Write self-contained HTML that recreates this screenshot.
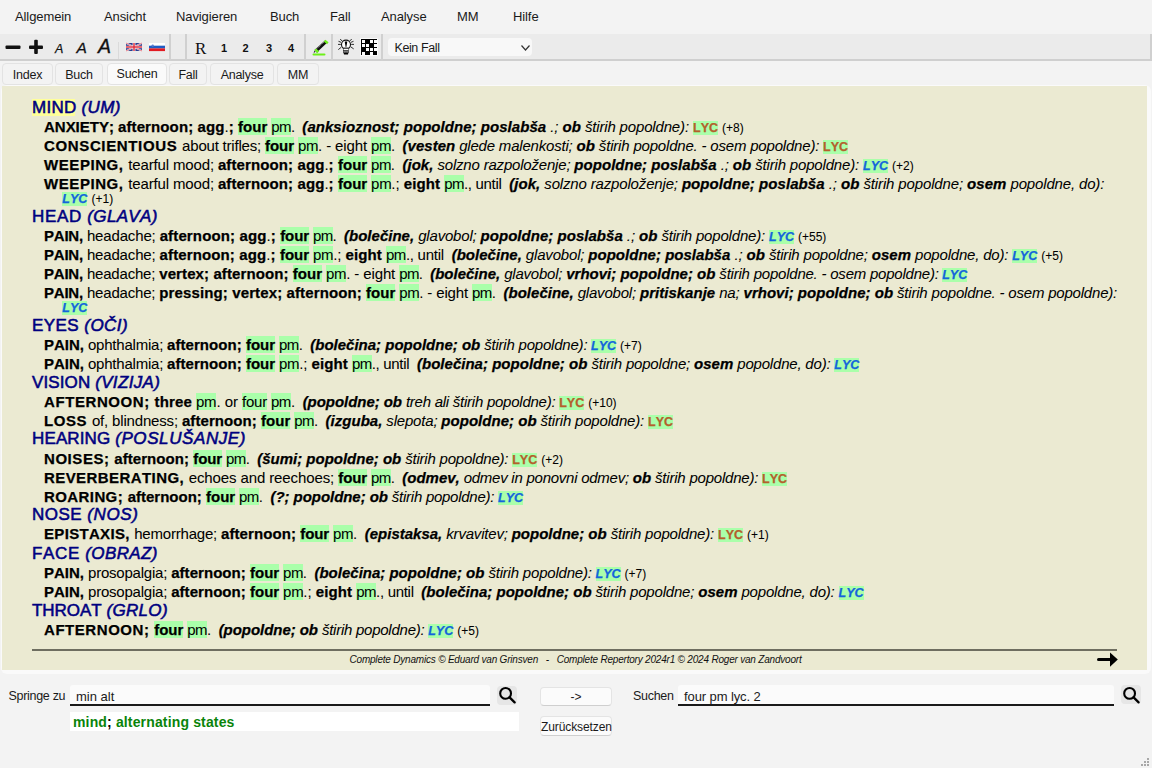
<!DOCTYPE html>
<html><head><meta charset="utf-8">
<style>
*{box-sizing:border-box}
html,body{margin:0;padding:0}
body{font-kerning:none;width:1152px;height:768px;overflow:hidden;position:relative;background:#f3f3f3;font-family:"Liberation Sans",sans-serif;color:#000}
.abs{position:absolute}
.menu span{position:absolute;top:9px;letter-spacing:-0.1px;font-size:13px;line-height:15px;color:#1a1a1a;white-space:nowrap}
#tb{position:absolute;left:0;top:34px;width:1152px;height:27px;background:#ebebeb;border-bottom:2px solid #cfcfcf;border-right:2px solid #d0d0d0}
.sep{position:absolute;top:34px;height:27px;width:2px;background:#d0d0d0}
.tab{position:absolute;top:63px;height:22px;border:1px solid #e3e3e3;border-radius:4px;background:#f3f3f3;font-size:12.5px;letter-spacing:-0.25px;line-height:23px;text-align:center;color:#1a1a1a}
.tab.sel{background:#fafafa;line-height:21px}
#panel{position:absolute;left:1px;top:85px;width:1150px;height:589px;background:#fafafa;border-radius:6px}
#beige{position:absolute;left:2px;top:86px;width:1145px;height:584px;background:#ebead2}
.ln{position:absolute;white-space:nowrap;line-height:19px;-webkit-text-stroke:0.05px currentColor}
.ln .b,.ln .lb,.ln .lu{-webkit-text-stroke:0.25px currentColor}
.hd{-webkit-text-stroke:0.55px currentColor}
.hd{font-size:17px;color:#000080}
.rb{font-size:15px}
.wr{font-size:15px}
.b{font-weight:bold}.i{font-style:italic}.h{background:#aaffaa}
.y{background:#ffff99}
.lb{font-size:12.5px;font-weight:bold;color:#b4602c}
.lu{font-size:12.5px;font-weight:bold;font-style:italic;color:#1464dc}
.c{font-size:12px}
#rule{position:absolute;left:32px;top:649px;width:1085px;height:2px;background:#6e6e60}
#foot{position:absolute;left:349.5px;top:654px;font-size:10px;letter-spacing:-0.2px;font-style:italic;line-height:12px;white-space:nowrap;color:#111}
.lbl{position:absolute;font-size:12.5px;letter-spacing:-0.3px;line-height:15px;color:#1a1a1a;white-space:nowrap}
.inp{position:absolute;background:#fbfbfb;border-radius:3px 3px 0 0;border-bottom:2px solid #1a1a1a}
.btn{position:absolute;background:#fbfbfb;border:1px solid #e4e4e4;border-bottom-color:#cfcfcf;border-radius:4px;font-size:12px;text-align:center;color:#1a1a1a}
</style></head><body>
<div class="menu">
<span style="left:15px">Allgemein</span>
<span style="left:104px">Ansicht</span>
<span style="left:176px">Navigieren</span>
<span style="left:270px">Buch</span>
<span style="left:330px">Fall</span>
<span style="left:381px">Analyse</span>
<span style="left:457px">MM</span>
<span style="left:513px">Hilfe</span>
</div>
<div id="tb"></div>
<div class="sep" style="left:169px"></div>
<div class="sep" style="left:185px"></div>
<div class="sep" style="left:304px"></div>
<div class="sep" style="left:331px"></div>
<div class="sep" style="left:381px"></div>
<div class="abs" style="left:118px;top:42px;width:1px;height:17px;background:#dadada"></div>
<!-- toolbar icons -->
<svg class="abs" style="left:0;top:34px" width="540" height="26" viewBox="0 34 540 26">
 <rect x="5.5" y="45.5" width="15" height="3.5" fill="#111" rx="1"/>
 <rect x="29" y="45.5" width="14" height="3.5" fill="#111" rx="1"/>
 <rect x="34.2" y="39.7" width="3.6" height="14.3" fill="#111" rx="1"/>
 <text x="55" y="53" font-family="Liberation Sans" font-style="italic" font-size="12.5" fill="#111" stroke="#111" stroke-width="0.25">A</text>
 <text x="76.5" y="53" font-family="Liberation Sans" font-style="italic" font-size="15.5" fill="#111" stroke="#111" stroke-width="0.3">A</text>
 <text x="98" y="53" font-family="Liberation Sans" font-style="italic" font-size="19.5" fill="#111" stroke="#111" stroke-width="0.35">A</text>
 <!-- UK flag -->
 <g>
  <rect x="126" y="43" width="16" height="8" fill="#2a3c90" rx="0.8"/>
  <path d="M126 43 L142 51 M142 43 L126 51" stroke="#f4f4f4" stroke-width="1.5"/>
  <path d="M126 43 L142 51 M142 43 L126 51" stroke="#d8283a" stroke-width="0.6"/>
  <rect x="132.6" y="43" width="2.8" height="8" fill="#f4f4f4"/>
  <rect x="126" y="45.8" width="16" height="2.4" fill="#f4f4f4"/>
  <rect x="133.3" y="43" width="1.4" height="8" fill="#e0283a"/>
  <rect x="126" y="46.3" width="16" height="1.4" fill="#e0283a"/>
 </g>
 <g>
  <rect x="149" y="43" width="16" height="2.7" fill="#fff"/>
  <rect x="149" y="45.7" width="16" height="2.7" fill="#1f5cc4"/>
  <rect x="149" y="48.4" width="16" height="2.7" fill="#e21a22"/>
  <circle cx="152.7" cy="45.6" r="1.2" fill="#5a7fd0"/>
 </g>
 <text x="195" y="54" font-family="Liberation Serif" font-size="17" fill="#111">R</text>
 <text x="221" y="52" font-family="Liberation Sans" font-weight="bold" font-size="11" fill="#111">1</text>
 <text x="242.5" y="52" font-family="Liberation Sans" font-weight="bold" font-size="11" fill="#111">2</text>
 <text x="266" y="52" font-family="Liberation Sans" font-weight="bold" font-size="11" fill="#111">3</text>
 <text x="288" y="52" font-family="Liberation Sans" font-weight="bold" font-size="11" fill="#111">4</text>
 <!-- pencil -->
 <path d="M315.6 51.2 L326 41.6" stroke="#111" stroke-width="3.2"/>
 <path d="M315.2 50.2 L325 41.2" stroke="#eee" stroke-width="0.8" stroke-dasharray="0.9 0.9"/>
 <path d="M324.6 40.6 L327.8 43.2" stroke="#6ef01a" stroke-width="2.4"/>
 <path d="M315.2 49.4 L318.2 52.2" stroke="#6ef01a" stroke-width="2.6"/>
 <path d="M313.6 53.6 L315.4 51.6 L314.2 50.8 Z" fill="#302040"/>
 <rect x="312.5" y="53.4" width="13" height="2.2" fill="#6ef01a" rx="1.1"/>
 <!-- bulb -->
 <g stroke="#1a1a1a" stroke-width="0.9" fill="none">
  <path d="M338 44.4 L340.8 44.4 M351.2 44.4 L354 44.4 M340.2 39 L342.3 41.2 M351.7 39 L349.6 41.2 M338.5 41.3 L341 42.3 M353.5 41.3 L351 42.3 M338.3 49.6 L341.2 47.3 M353.7 48.9 L350.7 46.8"/>
 </g>
 <circle cx="346" cy="44.6" r="4.5" fill="#fff" stroke="#111" stroke-width="1.1"/>
 <path d="M344.7 41.6 L347.3 41.6 L346.3 47.2 L345.7 47.2 Z" fill="#000"/>
 <rect x="343.3" y="47.6" width="5.4" height="1" fill="#111"/>
 <rect x="343.3" y="48.6" width="5.4" height="1.8" fill="#fafafa" stroke="#222" stroke-width="0.5"/>
 <rect x="343.3" y="50.4" width="5.4" height="2.6" fill="#7a7a7a" stroke="#222" stroke-width="0.5"/>
 <rect x="343.8" y="52.8" width="4.4" height="1.8" fill="#000" rx="0.9"/>
 <!-- grid -->
 <rect x="360" y="38" width="18" height="18" fill="#fafafa" rx="1"/>
 <g fill="#000">
  <rect x="361" y="39" width="16" height="1"/>
  <rect x="361" y="39" width="1" height="16"/>
  <rect x="361" y="43" width="16" height="1"/>
  <rect x="361" y="47" width="16" height="1"/>
  <rect x="361" y="51" width="16" height="1"/>
  <rect x="365" y="39" width="1" height="13"/>
  <rect x="369" y="39" width="1" height="13"/>
  <rect x="373" y="39" width="1" height="13"/>
  <rect x="365" y="40" width="5" height="3"/>
  <rect x="369" y="44" width="5" height="3"/>
  <rect x="361" y="48" width="5" height="3"/>
  <rect x="365" y="51" width="5" height="4"/>
  <rect x="373" y="51" width="4" height="4"/>
 </g>
</svg>
<div class="abs" style="left:388px;top:38px;width:144px;height:18px;background:#f8f8f8;border-radius:4px"></div>
<div class="lbl" style="left:394.5px;top:41px;font-size:12.5px;letter-spacing:-0.4px">Kein Fall</div>
<svg class="abs" style="left:520px;top:44px" width="12" height="8"><path d="M1.5 1.5 L5.5 6 L9.5 1.5" stroke="#333" stroke-width="1.2" fill="none"/></svg>
<!-- tabs -->
<div class="tab" style="left:2px;width:51px">Index</div>
<div class="tab" style="left:55px;width:48px">Buch</div>
<div class="tab sel" style="left:107px;width:60px">Suchen</div>
<div class="tab" style="left:169px;width:38px">Fall</div>
<div class="tab" style="left:210px;width:64px">Analyse</div>
<div class="tab" style="left:277px;width:42px">MM</div>
<!-- panel -->
<div id="panel"></div>
<div id="beige"></div>
<div class="abs" style="left:32px;top:99px;width:43px;height:17px;background:#ffff99"></div>
<div class="ln hd" style="left:32.00px;top:98px"><span class="" style="letter-spacing:0.25px">MIND </span></div>
<div class="ln hd" style="left:81.40px;top:98px"><span class="i" style="letter-spacing:0.46px">(UM)</span></div>
<div class="ln rb" style="left:44.00px;top:116.5px"><span class="b" style="letter-spacing:-0.02px">ANXIETY</span><span class="b" style="letter-spacing:-0.02px">; </span></div>
<div class="ln rb" style="left:118.00px;top:116.5px"><span class="b" style="letter-spacing:0.11px">afternoon; agg</span><span class="" style="letter-spacing:-0.06px">.</span><span class="b" style="letter-spacing:0.11px">; </span></div>
<div class="ln rb" style="left:238.00px;top:116.5px"><span class="b h" style="letter-spacing:0.03px">four</span><span class="" style="letter-spacing:-0.14px"> </span></div>
<div class="ln rb" style="left:271.30px;top:116.5px"><span class="h" style="letter-spacing:-0.60px">pm</span><span class="" style="letter-spacing:-0.36px">.&nbsp; </span></div>
<div class="ln rb" style="left:302.36px;top:116.5px"><span class="b i" style="letter-spacing:0.04px">(anksioznost; popoldne; poslabša</span><span class="i" style="letter-spacing:-0.10px"> .; </span><span class="b i" style="letter-spacing:0.05px">ob</span><span class="i" style="letter-spacing:-0.16px"> štirih popoldne): </span></div>
<div class="ln rb" style="left:693.00px;top:116.5px"><span class="h lb">LYC</span><span class="" style="letter-spacing:-0.16px"> </span><span class="c">(+8)</span></div>
<div class="ln rb" style="left:44.00px;top:135.5px"><span class="b" style="letter-spacing:0.64px">CONSCIENTIOUS</span><span class="b" style="letter-spacing:0.64px"> </span></div>
<div class="ln rb" style="left:182.10px;top:135.5px"><span class="" style="letter-spacing:-0.20px">about trifles; </span></div>
<div class="ln rb" style="left:265.00px;top:135.5px"><span class="b h" style="letter-spacing:-0.05px">four</span><span class="" style="letter-spacing:-0.22px"> </span></div>
<div class="ln rb" style="left:297.90px;top:135.5px"><span class="h" style="letter-spacing:-0.32px">pm</span><span class="" style="letter-spacing:-0.12px">. - eight </span></div>
<div class="ln rb" style="left:371.10px;top:135.5px"><span class="h" style="letter-spacing:-0.52px">pm</span><span class="" style="letter-spacing:-0.28px">.&nbsp; </span></div>
<div class="ln rb" style="left:402.56px;top:135.5px"><span class="b i" style="letter-spacing:0.02px">(vesten</span><span class="i" style="letter-spacing:-0.20px"> glede malenkosti; </span><span class="b i" style="letter-spacing:0.03px">ob</span><span class="i" style="letter-spacing:-0.19px"> štirih popoldne. - osem popoldne): </span></div>
<div class="ln rb" style="left:823.10px;top:135.5px"><span class="h lb">LYC</span></div>
<div class="ln rb" style="left:44.00px;top:154.5px"><span class="b" style="letter-spacing:0.57px">WEEPING</span><span class="b" style="letter-spacing:0.57px">, </span></div>
<div class="ln rb" style="left:128.30px;top:154.5px"><span class="" style="letter-spacing:-0.15px">tearful mood; </span><span class="b" style="letter-spacing:0.11px">afternoon; agg</span><span class="" style="letter-spacing:-0.05px">.</span><span class="b" style="letter-spacing:0.11px">; </span></div>
<div class="ln rb" style="left:338.00px;top:154.5px"><span class="b h" style="letter-spacing:-0.01px">four</span><span class="" style="letter-spacing:-0.18px"> </span></div>
<div class="ln rb" style="left:371.10px;top:154.5px"><span class="h" style="letter-spacing:-0.54px">pm</span><span class="" style="letter-spacing:-0.30px">.&nbsp; </span></div>
<div class="ln rb" style="left:402.46px;top:154.5px"><span class="b i" style="letter-spacing:0.03px">(jok,</span><span class="i" style="letter-spacing:-0.19px"> solzno razpoloženje; </span><span class="b i" style="letter-spacing:0.03px">popoldne; poslabša</span><span class="i" style="letter-spacing:-0.11px"> .; </span><span class="b i" style="letter-spacing:0.03px">ob</span><span class="i" style="letter-spacing:-0.17px"> štirih popoldne): </span></div>
<div class="ln rb" style="left:863.00px;top:154.5px"><span class="h lu">LYC</span><span class="" style="letter-spacing:-0.16px"> </span><span class="c">(+2)</span></div>
<div class="ln rb" style="left:44.00px;top:173.5px"><span class="b" style="letter-spacing:0.57px">WEEPING</span><span class="b" style="letter-spacing:0.57px">, </span></div>
<div class="ln rb" style="left:128.30px;top:173.5px"><span class="" style="letter-spacing:-0.15px">tearful mood; </span><span class="b" style="letter-spacing:0.11px">afternoon; agg</span><span class="" style="letter-spacing:-0.05px">.</span><span class="b" style="letter-spacing:0.11px">; </span></div>
<div class="ln rb" style="left:338.00px;top:173.5px"><span class="b h" style="letter-spacing:-0.01px">four</span><span class="" style="letter-spacing:-0.18px"> </span></div>
<div class="ln rb" style="left:371.10px;top:173.5px"><span class="h" style="letter-spacing:-0.30px">pm</span><span class="" style="letter-spacing:-0.05px">.; </span><span class="b" style="letter-spacing:0.11px">eight</span><span class="" style="letter-spacing:-0.05px"> </span></div>
<div class="ln rb" style="left:444.20px;top:173.5px"><span class="h" style="letter-spacing:-0.54px">pm</span><span class="" style="letter-spacing:-0.32px">., until&nbsp; </span></div>
<div class="ln rb" style="left:509.16px;top:173.5px"><span class="b i" style="letter-spacing:0.06px">(jok,</span><span class="i" style="letter-spacing:-0.16px"> solzno razpoloženje; </span><span class="b i" style="letter-spacing:0.06px">popoldne; poslabša</span><span class="i" style="letter-spacing:-0.08px"> .; </span><span class="b i" style="letter-spacing:0.06px">ob</span><span class="i" style="letter-spacing:-0.14px"> štirih popoldne; </span><span class="b i" style="letter-spacing:0.07px">osem</span><span class="i" style="letter-spacing:-0.16px"> popoldne, do):</span></div>
<div class="ln wr" style="left:62.30px;top:187.5px"><span class="h lu">LYC</span> <span class="c">(+1)</span></div>
<div class="ln hd" style="left:32.00px;top:206.5px"><span class="" style="letter-spacing:0.67px">HEAD </span></div>
<div class="ln hd" style="left:87.30px;top:206.5px"><span class="i" style="letter-spacing:0.35px">(GLAVA)</span></div>
<div class="ln rb" style="left:44.00px;top:225.5px"><span class="b" style="letter-spacing:-0.21px">PAIN</span><span class="b" style="letter-spacing:-0.21px">, </span></div>
<div class="ln rb" style="left:86.90px;top:225.5px"><span class="" style="letter-spacing:-0.15px">headache; </span><span class="b" style="letter-spacing:0.14px">afternoon; agg</span><span class="" style="letter-spacing:-0.02px">.</span><span class="b" style="letter-spacing:0.14px">; </span></div>
<div class="ln rb" style="left:280.20px;top:225.5px"><span class="b h" style="letter-spacing:-0.07px">four</span><span class="" style="letter-spacing:-0.24px"> </span></div>
<div class="ln rb" style="left:313.00px;top:225.5px"><span class="h" style="letter-spacing:-0.62px">pm</span><span class="" style="letter-spacing:-0.38px">.&nbsp; </span></div>
<div class="ln rb" style="left:343.96px;top:225.5px"><span class="b i" style="letter-spacing:0.02px">(bolečine,</span><span class="i" style="letter-spacing:-0.18px"> glavobol; </span><span class="b i" style="letter-spacing:0.03px">popoldne; poslabša</span><span class="i" style="letter-spacing:-0.12px"> .; </span><span class="b i" style="letter-spacing:0.03px">ob</span><span class="i" style="letter-spacing:-0.18px"> štirih popoldne): </span></div>
<div class="ln rb" style="left:769.00px;top:225.5px"><span class="h lu">LYC</span><span class="" style="letter-spacing:-0.16px"> </span><span class="c">(+55)</span></div>
<div class="ln rb" style="left:44.00px;top:244.5px"><span class="b" style="letter-spacing:-0.21px">PAIN</span><span class="b" style="letter-spacing:-0.21px">, </span></div>
<div class="ln rb" style="left:86.90px;top:244.5px"><span class="" style="letter-spacing:-0.16px">headache; </span><span class="b" style="letter-spacing:0.13px">afternoon; agg</span><span class="" style="letter-spacing:-0.03px">.</span><span class="b" style="letter-spacing:0.13px">; </span></div>
<div class="ln rb" style="left:280.00px;top:244.5px"><span class="b h" style="letter-spacing:-0.03px">four</span><span class="" style="letter-spacing:-0.20px"> </span></div>
<div class="ln rb" style="left:313.00px;top:244.5px"><span class="h" style="letter-spacing:-0.31px">pm</span><span class="" style="letter-spacing:-0.06px">.; </span><span class="b" style="letter-spacing:0.10px">eight</span><span class="" style="letter-spacing:-0.06px"> </span></div>
<div class="ln rb" style="left:386.00px;top:244.5px"><span class="h" style="letter-spacing:-0.48px">pm</span><span class="" style="letter-spacing:-0.26px">., until&nbsp; </span></div>
<div class="ln rb" style="left:451.66px;top:244.5px"><span class="b i" style="letter-spacing:0.02px">(bolečine,</span><span class="i" style="letter-spacing:-0.18px"> glavobol; </span><span class="b i" style="letter-spacing:0.02px">popoldne; poslabša</span><span class="i" style="letter-spacing:-0.12px"> .; </span><span class="b i" style="letter-spacing:0.03px">ob</span><span class="i" style="letter-spacing:-0.18px"> štirih popoldne; </span><span class="b i" style="letter-spacing:0.03px">osem</span><span class="i" style="letter-spacing:-0.19px"> popoldne, do): </span></div>
<div class="ln rb" style="left:1012.20px;top:244.5px"><span class="h lu">LYC</span><span class="" style="letter-spacing:-0.16px"> </span><span class="c">(+5)</span></div>
<div class="ln rb" style="left:44.00px;top:263.5px"><span class="b" style="letter-spacing:-0.21px">PAIN</span><span class="b" style="letter-spacing:-0.21px">, </span></div>
<div class="ln rb" style="left:86.90px;top:263.5px"><span class="" style="letter-spacing:-0.19px">headache; </span><span class="b" style="letter-spacing:0.10px">vertex; afternoon; </span></div>
<div class="ln rb" style="left:292.80px;top:263.5px"><span class="b h" style="letter-spacing:0.03px">four</span><span class="" style="letter-spacing:-0.14px"> </span></div>
<div class="ln rb" style="left:326.10px;top:263.5px"><span class="h" style="letter-spacing:-0.32px">pm</span><span class="" style="letter-spacing:-0.13px">. - eight </span></div>
<div class="ln rb" style="left:399.20px;top:263.5px"><span class="h" style="letter-spacing:-0.62px">pm</span><span class="" style="letter-spacing:-0.38px">.&nbsp; </span></div>
<div class="ln rb" style="left:430.16px;top:263.5px"><span class="b i">(bolečine,</span><span class="i" style="letter-spacing:-0.21px"> glavobol; </span><span class="b i">vrhovi; popoldne; ob</span><span class="i" style="letter-spacing:-0.22px"> štirih popoldne. - osem popoldne): </span></div>
<div class="ln rb" style="left:942.20px;top:263.5px"><span class="h lu">LYC</span></div>
<div class="ln rb" style="left:44.00px;top:282.5px"><span class="b" style="letter-spacing:-0.21px">PAIN</span><span class="b" style="letter-spacing:-0.21px">, </span></div>
<div class="ln rb" style="left:86.90px;top:282.5px"><span class="" style="letter-spacing:-0.18px">headache; </span><span class="b" style="letter-spacing:0.12px">pressing; vertex; afternoon; </span></div>
<div class="ln rb" style="left:366.10px;top:282.5px"><span class="b h" style="letter-spacing:-0.01px">four</span><span class="" style="letter-spacing:-0.18px"> </span></div>
<div class="ln rb" style="left:399.20px;top:282.5px"><span class="h" style="letter-spacing:-0.35px">pm</span><span class="" style="letter-spacing:-0.15px">. - eight </span></div>
<div class="ln rb" style="left:472.00px;top:282.5px"><span class="h" style="letter-spacing:-0.52px">pm</span><span class="" style="letter-spacing:-0.28px">.&nbsp; </span></div>
<div class="ln rb" style="left:503.46px;top:282.5px"><span class="b i" style="letter-spacing:0.02px">(bolečine,</span><span class="i" style="letter-spacing:-0.19px"> glavobol; </span><span class="b i" style="letter-spacing:0.02px">pritiskanje</span><span class="i" style="letter-spacing:-0.18px"> na; </span><span class="b i" style="letter-spacing:0.02px">vrhovi; popoldne; ob</span><span class="i" style="letter-spacing:-0.20px"> štirih popoldne. - osem popoldne):</span></div>
<div class="ln wr" style="left:62.30px;top:296.5px"><span class="h lu">LYC</span></div>
<div class="ln hd" style="left:32.00px;top:315.5px"><span class="" style="letter-spacing:0.44px">EYES </span></div>
<div class="ln hd" style="left:84.30px;top:315.5px"><span class="i" style="letter-spacing:0.43px">(OČI)</span></div>
<div class="ln rb" style="left:44.00px;top:334.5px"><span class="b" style="letter-spacing:-0.03px">PAIN</span><span class="b" style="letter-spacing:-0.03px">, </span></div>
<div class="ln rb" style="left:88.00px;top:334.5px"><span class="" style="letter-spacing:-0.22px">ophthalmia; </span><span class="b" style="letter-spacing:0.05px">afternoon; </span></div>
<div class="ln rb" style="left:246.00px;top:334.5px"><span class="b h" style="letter-spacing:-0.05px">four</span><span class="" style="letter-spacing:-0.22px"> </span></div>
<div class="ln rb" style="left:278.90px;top:334.5px"><span class="h" style="letter-spacing:-0.54px">pm</span><span class="" style="letter-spacing:-0.30px">.&nbsp; </span></div>
<div class="ln rb" style="left:310.26px;top:334.5px"><span class="b i">(bolečina; popoldne; ob</span><span class="i" style="letter-spacing:-0.21px"> štirih popoldne): </span></div>
<div class="ln rb" style="left:591.10px;top:334.5px"><span class="h lu">LYC</span><span class="" style="letter-spacing:-0.16px"> </span><span class="c">(+7)</span></div>
<div class="ln rb" style="left:44.00px;top:353.5px"><span class="b" style="letter-spacing:-0.03px">PAIN</span><span class="b" style="letter-spacing:-0.03px">, </span></div>
<div class="ln rb" style="left:88.00px;top:353.5px"><span class="" style="letter-spacing:-0.22px">ophthalmia; </span><span class="b" style="letter-spacing:0.05px">afternoon; </span></div>
<div class="ln rb" style="left:246.00px;top:353.5px"><span class="b h" style="letter-spacing:-0.05px">four</span><span class="" style="letter-spacing:-0.22px"> </span></div>
<div class="ln rb" style="left:278.90px;top:353.5px"><span class="h" style="letter-spacing:-0.30px">pm</span><span class="" style="letter-spacing:-0.05px">.; </span><span class="b" style="letter-spacing:0.11px">eight</span><span class="" style="letter-spacing:-0.05px"> </span></div>
<div class="ln rb" style="left:352.00px;top:353.5px"><span class="h" style="letter-spacing:-0.54px">pm</span><span class="" style="letter-spacing:-0.32px">., until&nbsp; </span></div>
<div class="ln rb" style="left:416.96px;top:353.5px"><span class="b i" style="letter-spacing:0.02px">(bolečina; popoldne; ob</span><span class="i" style="letter-spacing:-0.19px"> štirih popoldne; </span><span class="b i" style="letter-spacing:0.02px">osem</span><span class="i" style="letter-spacing:-0.20px"> popoldne, do): </span></div>
<div class="ln rb" style="left:834.25px;top:353.5px"><span class="h lu">LYC</span></div>
<div class="ln hd" style="left:32.00px;top:372.5px"><span class="" style="letter-spacing:0.12px">VISION </span></div>
<div class="ln hd" style="left:95.20px;top:372.5px"><span class="i" style="letter-spacing:0.34px">(VIZIJA)</span></div>
<div class="ln rb" style="left:44.00px;top:391.5px"><span class="b" style="letter-spacing:0.58px">AFTERNOON</span><span class="b" style="letter-spacing:0.58px">; </span></div>
<div class="ln rb" style="left:154.50px;top:391.5px"><span class="b" style="letter-spacing:0.14px">three</span><span class="" style="letter-spacing:-0.03px"> </span></div>
<div class="ln rb" style="left:196.00px;top:391.5px"><span class="h" style="letter-spacing:-0.23px">pm</span><span class="" style="letter-spacing:-0.02px">. or </span></div>
<div class="ln rb" style="left:242.10px;top:391.5px"><span class="h" style="letter-spacing:-0.24px">four</span><span class="" style="letter-spacing:-0.15px"> </span></div>
<div class="ln rb" style="left:271.00px;top:391.5px"><span class="h" style="letter-spacing:-0.48px">pm</span><span class="" style="letter-spacing:-0.24px">.&nbsp; </span></div>
<div class="ln rb" style="left:302.66px;top:391.5px"><span class="b i" style="letter-spacing:-0.05px">(popoldne; ob</span><span class="i" style="letter-spacing:-0.25px"> treh ali štirih popoldne): </span></div>
<div class="ln rb" style="left:559.20px;top:391.5px"><span class="h lb">LYC</span><span class="" style="letter-spacing:-0.16px"> </span><span class="c">(+10)</span></div>
<div class="ln rb" style="left:44.00px;top:410.5px"><span class="b" style="letter-spacing:0.58px">LOSS</span><span class="b" style="letter-spacing:0.58px"> </span></div>
<div class="ln rb" style="left:91.90px;top:410.5px"><span class="" style="letter-spacing:-0.17px">of, blindness; </span><span class="b" style="letter-spacing:0.08px">afternoon; </span></div>
<div class="ln rb" style="left:261.10px;top:410.5px"><span class="b h" style="letter-spacing:-0.01px">four</span><span class="" style="letter-spacing:-0.18px"> </span></div>
<div class="ln rb" style="left:294.20px;top:410.5px"><span class="h" style="letter-spacing:-0.54px">pm</span><span class="" style="letter-spacing:-0.30px">.&nbsp; </span></div>
<div class="ln rb" style="left:325.56px;top:410.5px"><span class="b i" style="letter-spacing:0.02px">(izguba,</span><span class="i" style="letter-spacing:-0.19px"> slepota; </span><span class="b i" style="letter-spacing:0.02px">popoldne; ob</span><span class="i" style="letter-spacing:-0.19px"> štirih popoldne): </span></div>
<div class="ln rb" style="left:648.10px;top:410.5px"><span class="h lb">LYC</span></div>
<div class="ln hd" style="left:32.00px;top:429px"><span class="" style="letter-spacing:0.13px">HEARING </span></div>
<div class="ln hd" style="left:115.20px;top:429px"><span class="i" style="letter-spacing:0.59px">(POSLUŠANJE)</span></div>
<div class="ln rb" style="left:44.00px;top:448.5px"><span class="b" style="letter-spacing:0.56px">NOISES</span><span class="b" style="letter-spacing:0.56px">; </span></div>
<div class="ln rb" style="left:114.30px;top:448.5px"><span class="b" style="letter-spacing:0.05px">afternoon; </span></div>
<div class="ln rb" style="left:193.20px;top:448.5px"><span class="b h" style="letter-spacing:-0.05px">four</span><span class="" style="letter-spacing:-0.22px"> </span></div>
<div class="ln rb" style="left:226.10px;top:448.5px"><span class="h" style="letter-spacing:-0.58px">pm</span><span class="" style="letter-spacing:-0.34px">.&nbsp; </span></div>
<div class="ln rb" style="left:257.26px;top:448.5px"><span class="b i" style="letter-spacing:-0.01px">(šumi; popoldne; ob</span><span class="i" style="letter-spacing:-0.21px"> štirih popoldne): </span></div>
<div class="ln rb" style="left:512.20px;top:448.5px"><span class="h lb">LYC</span><span class="" style="letter-spacing:-0.16px"> </span><span class="c">(+2)</span></div>
<div class="ln rb" style="left:44.00px;top:467.5px"><span class="b" style="letter-spacing:0.42px">REVERBERATING</span><span class="b" style="letter-spacing:0.42px">, </span></div>
<div class="ln rb" style="left:188.70px;top:467.5px"><span class="" style="letter-spacing:-0.11px">echoes and reechoes; </span></div>
<div class="ln rb" style="left:338.20px;top:467.5px"><span class="b h" style="letter-spacing:-0.05px">four</span><span class="" style="letter-spacing:-0.22px"> </span></div>
<div class="ln rb" style="left:371.10px;top:467.5px"><span class="h" style="letter-spacing:-0.58px">pm</span><span class="" style="letter-spacing:-0.34px">.&nbsp; </span></div>
<div class="ln rb" style="left:402.26px;top:467.5px"><span class="b i">(odmev,</span><span class="i" style="letter-spacing:-0.25px"> odmev in ponovni odmev; </span><span class="b i">ob</span><span class="i" style="letter-spacing:-0.21px"> štirih popoldne): </span></div>
<div class="ln rb" style="left:762.10px;top:467.5px"><span class="h lb">LYC</span></div>
<div class="ln rb" style="left:44.00px;top:486.5px"><span class="b" style="letter-spacing:0.41px">ROARING</span><span class="b" style="letter-spacing:0.41px">; </span></div>
<div class="ln rb" style="left:127.70px;top:486.5px"><span class="b">afternoon; </span></div>
<div class="ln rb" style="left:206.10px;top:486.5px"><span class="b h" style="letter-spacing:-0.05px">four</span><span class="" style="letter-spacing:-0.22px"> </span></div>
<div class="ln rb" style="left:239.00px;top:486.5px"><span class="h" style="letter-spacing:-0.52px">pm</span><span class="" style="letter-spacing:-0.28px">.&nbsp; </span></div>
<div class="ln rb" style="left:270.46px;top:486.5px"><span class="b i" style="letter-spacing:-0.05px">(?; popoldne; ob</span><span class="i" style="letter-spacing:-0.26px"> štirih popoldne): </span></div>
<div class="ln rb" style="left:498.10px;top:486.5px"><span class="h lu">LYC</span></div>
<div class="ln hd" style="left:32.00px;top:505px"><span class="" style="letter-spacing:0.48px">NOSE </span></div>
<div class="ln hd" style="left:87.30px;top:505px"><span class="i" style="letter-spacing:0.59px">(NOS)</span></div>
<div class="ln rb" style="left:44.00px;top:524px"><span class="b" style="letter-spacing:0.32px">EPISTAXIS</span><span class="b" style="letter-spacing:0.32px">, </span></div>
<div class="ln rb" style="left:134.20px;top:524px"><span class="" style="letter-spacing:-0.20px">hemorrhage; </span><span class="b" style="letter-spacing:0.09px">afternoon; </span></div>
<div class="ln rb" style="left:300.30px;top:524px"><span class="b h" style="letter-spacing:-0.09px">four</span><span class="" style="letter-spacing:-0.26px"> </span></div>
<div class="ln rb" style="left:333.00px;top:524px"><span class="h" style="letter-spacing:-0.46px">pm</span><span class="" style="letter-spacing:-0.22px">.&nbsp; </span></div>
<div class="ln rb" style="left:364.76px;top:524px"><span class="b i">(epistaksa,</span><span class="i" style="letter-spacing:-0.19px"> krvavitev; </span><span class="b i">popoldne; ob</span><span class="i" style="letter-spacing:-0.20px"> štirih popoldne): </span></div>
<div class="ln rb" style="left:718.10px;top:524px"><span class="h lb">LYC</span><span class="" style="letter-spacing:-0.16px"> </span><span class="c">(+1)</span></div>
<div class="ln hd" style="left:32.00px;top:543.5px"><span class="" style="letter-spacing:0.65px">FACE </span></div>
<div class="ln hd" style="left:85.30px;top:543.5px"><span class="i" style="letter-spacing:0.37px">(OBRAZ)</span></div>
<div class="ln rb" style="left:44.00px;top:563px"><span class="b" style="letter-spacing:-0.03px">PAIN</span><span class="b" style="letter-spacing:-0.03px">, </span></div>
<div class="ln rb" style="left:88.00px;top:563px"><span class="" style="letter-spacing:-0.21px">prosopalgia; </span><span class="b" style="letter-spacing:0.05px">afternoon; </span></div>
<div class="ln rb" style="left:250.00px;top:563px"><span class="b h" style="letter-spacing:-0.01px">four</span><span class="" style="letter-spacing:-0.18px"> </span></div>
<div class="ln rb" style="left:283.10px;top:563px"><span class="h" style="letter-spacing:-0.54px">pm</span><span class="" style="letter-spacing:-0.30px">.&nbsp; </span></div>
<div class="ln rb" style="left:314.46px;top:563px"><span class="b i">(bolečina; popoldne; ob</span><span class="i" style="letter-spacing:-0.20px"> štirih popoldne): </span></div>
<div class="ln rb" style="left:595.60px;top:563px"><span class="h lu">LYC</span><span class="" style="letter-spacing:-0.16px"> </span><span class="c">(+7)</span></div>
<div class="ln rb" style="left:44.00px;top:582px"><span class="b" style="letter-spacing:-0.03px">PAIN</span><span class="b" style="letter-spacing:-0.03px">, </span></div>
<div class="ln rb" style="left:88.00px;top:582px"><span class="" style="letter-spacing:-0.21px">prosopalgia; </span><span class="b" style="letter-spacing:0.05px">afternoon; </span></div>
<div class="ln rb" style="left:250.00px;top:582px"><span class="b h" style="letter-spacing:-0.01px">four</span><span class="" style="letter-spacing:-0.18px"> </span></div>
<div class="ln rb" style="left:283.10px;top:582px"><span class="h" style="letter-spacing:-0.29px">pm</span><span class="" style="letter-spacing:-0.05px">.; </span><span class="b" style="letter-spacing:0.12px">eight</span><span class="" style="letter-spacing:-0.05px"> </span></div>
<div class="ln rb" style="left:356.25px;top:582px"><span class="h" style="letter-spacing:-0.52px">pm</span><span class="" style="letter-spacing:-0.30px">., until&nbsp; </span></div>
<div class="ln rb" style="left:421.36px;top:582px"><span class="b i" style="letter-spacing:0.01px">(bolečina; popoldne; ob</span><span class="i" style="letter-spacing:-0.19px"> štirih popoldne; </span><span class="b i" style="letter-spacing:0.02px">osem</span><span class="i" style="letter-spacing:-0.20px"> popoldne, do): </span></div>
<div class="ln rb" style="left:838.60px;top:582px"><span class="h lu">LYC</span></div>
<div class="ln hd" style="left:32.00px;top:600.5px"><span class="" style="letter-spacing:-0.03px">THROAT </span></div>
<div class="ln hd" style="left:106.40px;top:600.5px"><span class="i" style="letter-spacing:0.33px">(GRLO)</span></div>
<div class="ln rb" style="left:44.00px;top:619.5px"><span class="b" style="letter-spacing:0.55px">AFTERNOON</span><span class="b" style="letter-spacing:0.55px">; </span></div>
<div class="ln rb" style="left:154.20px;top:619.5px"><span class="b h" style="letter-spacing:-0.03px">four</span><span class="" style="letter-spacing:-0.20px"> </span></div>
<div class="ln rb" style="left:187.20px;top:619.5px"><span class="h" style="letter-spacing:-0.52px">pm</span><span class="" style="letter-spacing:-0.28px">.&nbsp; </span></div>
<div class="ln rb" style="left:218.66px;top:619.5px"><span class="b i" style="letter-spacing:-0.05px">(popoldne; ob</span><span class="i" style="letter-spacing:-0.25px"> štirih popoldne): </span></div>
<div class="ln rb" style="left:428.20px;top:619.5px"><span class="h lu">LYC</span><span class="" style="letter-spacing:-0.16px"> </span><span class="c">(+5)</span></div>
<div id="rule"></div>
<div id="foot">Complete Dynamics © Eduard van Grinsven &nbsp; - &nbsp; Complete Repertory 2024r1 © 2024 Roger van Zandvoort</div>
<svg class="abs" style="left:1096px;top:652px" width="23" height="16"><path d="M2.5 7.5 L15 7.5" stroke="#000" stroke-width="3" stroke-linecap="round"/><path d="M14 0.5 L21.8 7.5 L14 14.8 Z" fill="#000"/></svg>
<!-- bottom -->
<div class="lbl" style="left:8.5px;top:689px">Springe zu</div>
<div class="inp" style="left:70px;top:685px;width:420px;height:21px"></div>
<div class="lbl" style="left:76px;top:689px;font-size:13px;letter-spacing:0">min alt</div>
<div class="abs" style="left:497px;top:686px;width:20px;height:19px;background:#e6e6e6;border-radius:4px"></div>
<svg class="abs" style="left:498px;top:686px" width="20" height="19"><circle cx="7.6" cy="7.4" r="5.4" stroke="#000" stroke-width="2.1" fill="none"/><path d="M11.6 11.4 L16.6 16.4" stroke="#000" stroke-width="2.3" stroke-linecap="round"/></svg>
<div class="abs" style="left:70px;top:712px;width:449px;height:19px;background:#fff"></div>
<div class="abs" style="left:73px;top:714px;font-size:14px;letter-spacing:0.15px;line-height:16px;font-weight:bold;color:#0a840a;white-space:nowrap">mind<span style="color:#000">;</span> alternating states</div>
<div class="btn" style="left:540px;top:687px;width:72px;height:19px;line-height:18px">-&gt;</div>
<div class="btn" style="left:540px;top:716px;width:72px;height:20px;line-height:20px;letter-spacing:-0.1px">Zurücksetzen</div>
<div class="lbl" style="left:633px;top:689px">Suchen</div>
<div class="inp" style="left:678px;top:685px;width:436px;height:21px"></div>
<div class="lbl" style="left:684px;top:689px;font-size:13px;letter-spacing:-0.1px">four pm lyc. 2</div>
<div class="abs" style="left:1121px;top:685px;width:20px;height:19px;background:#e6e6e6;border-radius:4px"></div>
<svg class="abs" style="left:1122px;top:686px" width="20" height="19"><circle cx="7.6" cy="7.4" r="5.4" stroke="#000" stroke-width="2.1" fill="none"/><path d="M11.6 11.4 L16.6 16.4" stroke="#000" stroke-width="2.3" stroke-linecap="round"/></svg>
<svg class="abs" style="left:1140px;top:756px" width="12" height="12"><g fill="#a8a8a8"><rect x="7" y="2" width="2" height="2"/><rect x="4" y="5" width="2" height="2"/><rect x="7" y="5" width="2" height="2"/><rect x="1" y="8" width="2" height="2"/><rect x="4" y="8" width="2" height="2"/><rect x="7" y="8" width="2" height="2"/></g></svg>
</body></html>
